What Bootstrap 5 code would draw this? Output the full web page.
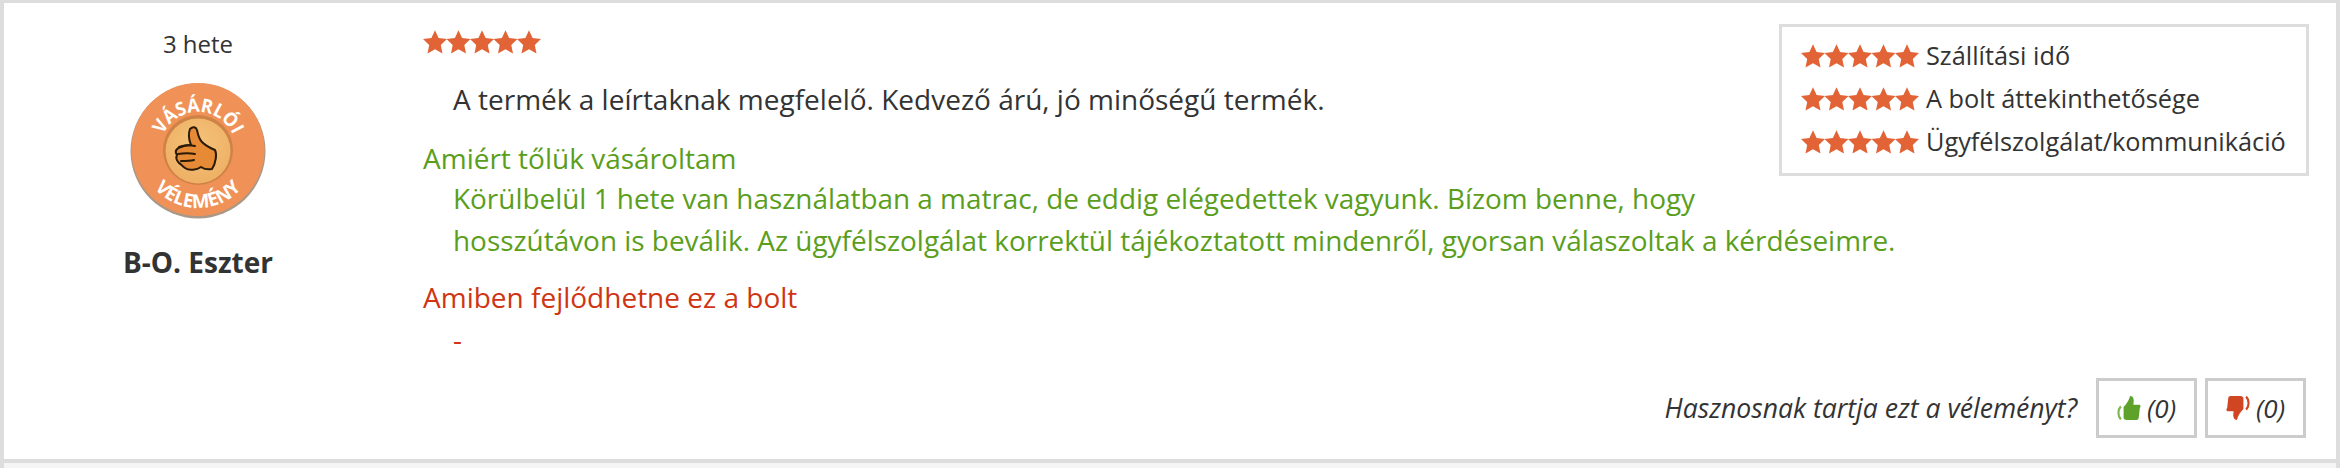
<!DOCTYPE html>
<html lang="hu">
<head>
  <meta charset="UTF-8">
  <title>Vásárlói vélemény</title>
  <link href="https://cdn.jsdelivr.net/npm/bootstrap@5.3.2/dist/css/bootstrap.min.css" rel="stylesheet">
  <style>
    body { background: #fff; font-family: "Open Sans", sans-serif; font-size: 28px; line-height: 42px; color: #333; }
    .keret { width: 2340px; height: 468px; background: #f5f5f5; border: solid #ddd; border-width: 3px 4px 0 4px; }
    .velemeny { background: #fff; border-bottom: 4px solid #ddd; height: 460px; }
    .bal-oszlop { width: 388px; padding-top: 24px; }
    .datum { font-size: 24px; line-height: 34px; }
    .jelveny { display: block; width: 140px; height: 140px; margin: 19px auto 22px; }
    .nev { font-size: 28px; font-weight: 700; line-height: 40px; }
    .jobb-oszlop { padding: 27px 27px 0 31px; }
    .csillagok { display: block; width: 118px; height: 24px; }
    .ertekeles { float: right; width: 530px; height: 152px; margin: -6px 0 20px 72px; padding: 7px 19px; border: 3px solid #ddd; font-size: 25.3px; line-height: 43px; }
    .ertekeles .csillagok { margin-right: 7px; }
    .szoveg { margin: 24px 0 0 30px; }
    .pozitiv { color: #5a9e1c; }
    .negativ { color: #cf3413; }
    .pozitiv .cim { margin-top: 17px; margin-bottom: -2px; }
    .negativ .cim { margin-top: 15px; }
    .behuzott { padding-left: 30px; font-size: 27.92px; }
    .szavazas { justify-content: flex-end; align-items: center; gap: 8px; margin-top: 18px; margin-right: 3px; font-style: italic; font-size: 26.6px; }
    .szavazas span.kerdes { margin-right: 11px; }
    .szavazo { width: 101px; height: 60px; border: 3px solid #ccc; border-radius: 0; background: #fff; color: #333; font-style: italic; font-size: 26px; padding: 0; gap: 6px; }
  </style>
</head>
<body>

  <svg width="0" height="0" class="d-block">
    <defs>
      <polygon id="csillag" points="12,.2 15.6,8 24,9 17.8,14.9 19.5,23.6 12,19.2 4.5,23.6 6.2,14.9 0,9 8.4,8" fill="#e26436"/>
      <symbol id="ot-csillag" viewBox="0 0 118 24">
        <use href="#csillag" x="0"/>
        <use href="#csillag" x="23.5"/>
        <use href="#csillag" x="47"/>
        <use href="#csillag" x="70.5"/>
        <use href="#csillag" x="94"/>
      </symbol>
    </defs>
  </svg>

  <div class="keret">
    <div class="velemeny d-flex">
      <div class="bal-oszlop flex-shrink-0 text-center">
        <div class="datum">3 hete</div>
        <svg class="jelveny" viewBox="0 0 140 140">
          <defs>
            <radialGradient id="belso" cx="50%" cy="40%" r="60%">
              <stop offset="0" stop-color="#f4c47a"/>
              <stop offset="1" stop-color="#eeb065"/>
            </radialGradient>
            <path id="felso-ív" d="M 32 70 A 38 38 0 0 1 108 70"/>
            <path id="also-ív" d="M 12 70 A 58 58 0 0 0 128 70"/>
          </defs>
          <circle cx="70" cy="71" r="67.5" fill="#a99888"/>
          <circle cx="70" cy="69.5" r="66.5" fill="#f09257"/>
          <circle cx="70" cy="70" r="35" fill="#cf8246"/>
          <circle cx="70" cy="71" r="32.5" fill="url(#belso)"/>
          <text font-family="Open Sans, sans-serif" font-weight="700" font-size="19" fill="#fff">
            <textPath href="#felso-ív" startOffset="50%" text-anchor="middle" textLength="88" lengthAdjust="spacingAndGlyphs">VÁSÁRLÓI</textPath>
          </text>
          <text font-family="Open Sans, sans-serif" font-weight="700" font-size="19" fill="#fff">
            <textPath href="#also-ív" startOffset="50%" text-anchor="middle" textLength="98" lengthAdjust="spacingAndGlyphs">VÉLEMÉNY</textPath>
          </text>
          <path d="M62 49c3-3 6-2 7 1 1 5 2 9 5 12 3 3 8 6 13 8 2 4 1 13-3 19-5 1-8 0-11-2-4 3-12 4-16 1-3-2-4-4-6-5-3-3-3-6-2-8-3-4 0-7 4-8 4-2 8-2 10-2-2-5-3-11-1-16z" fill="#e78a35" stroke="#2a1a08" stroke-width="2" stroke-linejoin="round"/>
          <path d="M51 67c5-2 11-2 16-1M50 74c6-1 12-1 17 0M53 81c4 0 9 0 13-1" fill="none" stroke="#2a1a08" stroke-width="2" stroke-linecap="round"/>
        </svg>
        <div class="nev">B-O. Eszter</div>
      </div>

      <div class="jobb-oszlop flex-grow-1">
        <div class="ertekeles">
          <div class="d-flex align-items-center"><svg class="csillagok"><use href="#ot-csillag"/></svg>Szállítási idő</div>
          <div class="d-flex align-items-center"><svg class="csillagok"><use href="#ot-csillag"/></svg>A bolt áttekinthetősége</div>
          <div class="d-flex align-items-center"><svg class="csillagok"><use href="#ot-csillag"/></svg>Ügyfélszolgálat/kommunikáció</div>
        </div>
        <svg class="csillagok"><use href="#ot-csillag"/></svg>
        <div class="szoveg">A termék a leírtaknak megfelelő. Kedvező árú, jó minőségű termék.</div>
        <div class="pozitiv">
          <div class="cim">Amiért tőlük vásároltam</div>
          <div class="behuzott">Körülbelül 1 hete van használatban a matrac, de eddig elégedettek vagyunk. Bízom benne, hogy hosszútávon is beválik. Az ügyfélszolgálat korrektül tájékoztatott mindenről, gyorsan válaszoltak a kérdéseimre.</div>
        </div>
        <div class="negativ">
          <div class="cim">Amiben fejlődhetne ez a bolt</div>
          <div class="behuzott">-</div>
        </div>
        <div class="szavazas d-flex">
          <span class="kerdes">Hasznosnak tartja ezt a véleményt?</span>
          <button type="button" class="btn szavazo d-flex align-items-center justify-content-center">
            <svg width="24" height="26" viewBox="0 0 22 24"><path d="M6 11c3-3 5-6 6-10 3 0 4 3 3 8h5c2 0 2 2 1 3l-1 9c0 1-1 2-2 2H9c-2 0-3-1-3-2z" fill="#5fa22b"/><path d="M3.5 10.500c-3 3-3 9 0 12" fill="none" stroke="#7cb84a" stroke-width="2"/></svg>
            (0)
          </button>
          <button type="button" class="btn szavazo d-flex align-items-center justify-content-center">
            <svg width="24" height="26" viewBox="0 0 22 24"><path d="M16 13c-3 3-5 6-6 10-3 0-4-3-3-8H2C0 15 0 13 1 12l1-9c0-1 1-2 2-2h9c2 0 3 1 3 2z" fill="#d14622"/><path d="M18.500 1.500c3 3 3 9 0 12" fill="none" stroke="#d14622" stroke-width="2"/></svg>
            (0)
          </button>
        </div>
      </div>
    </div>
  </div>

</body>
</html>
